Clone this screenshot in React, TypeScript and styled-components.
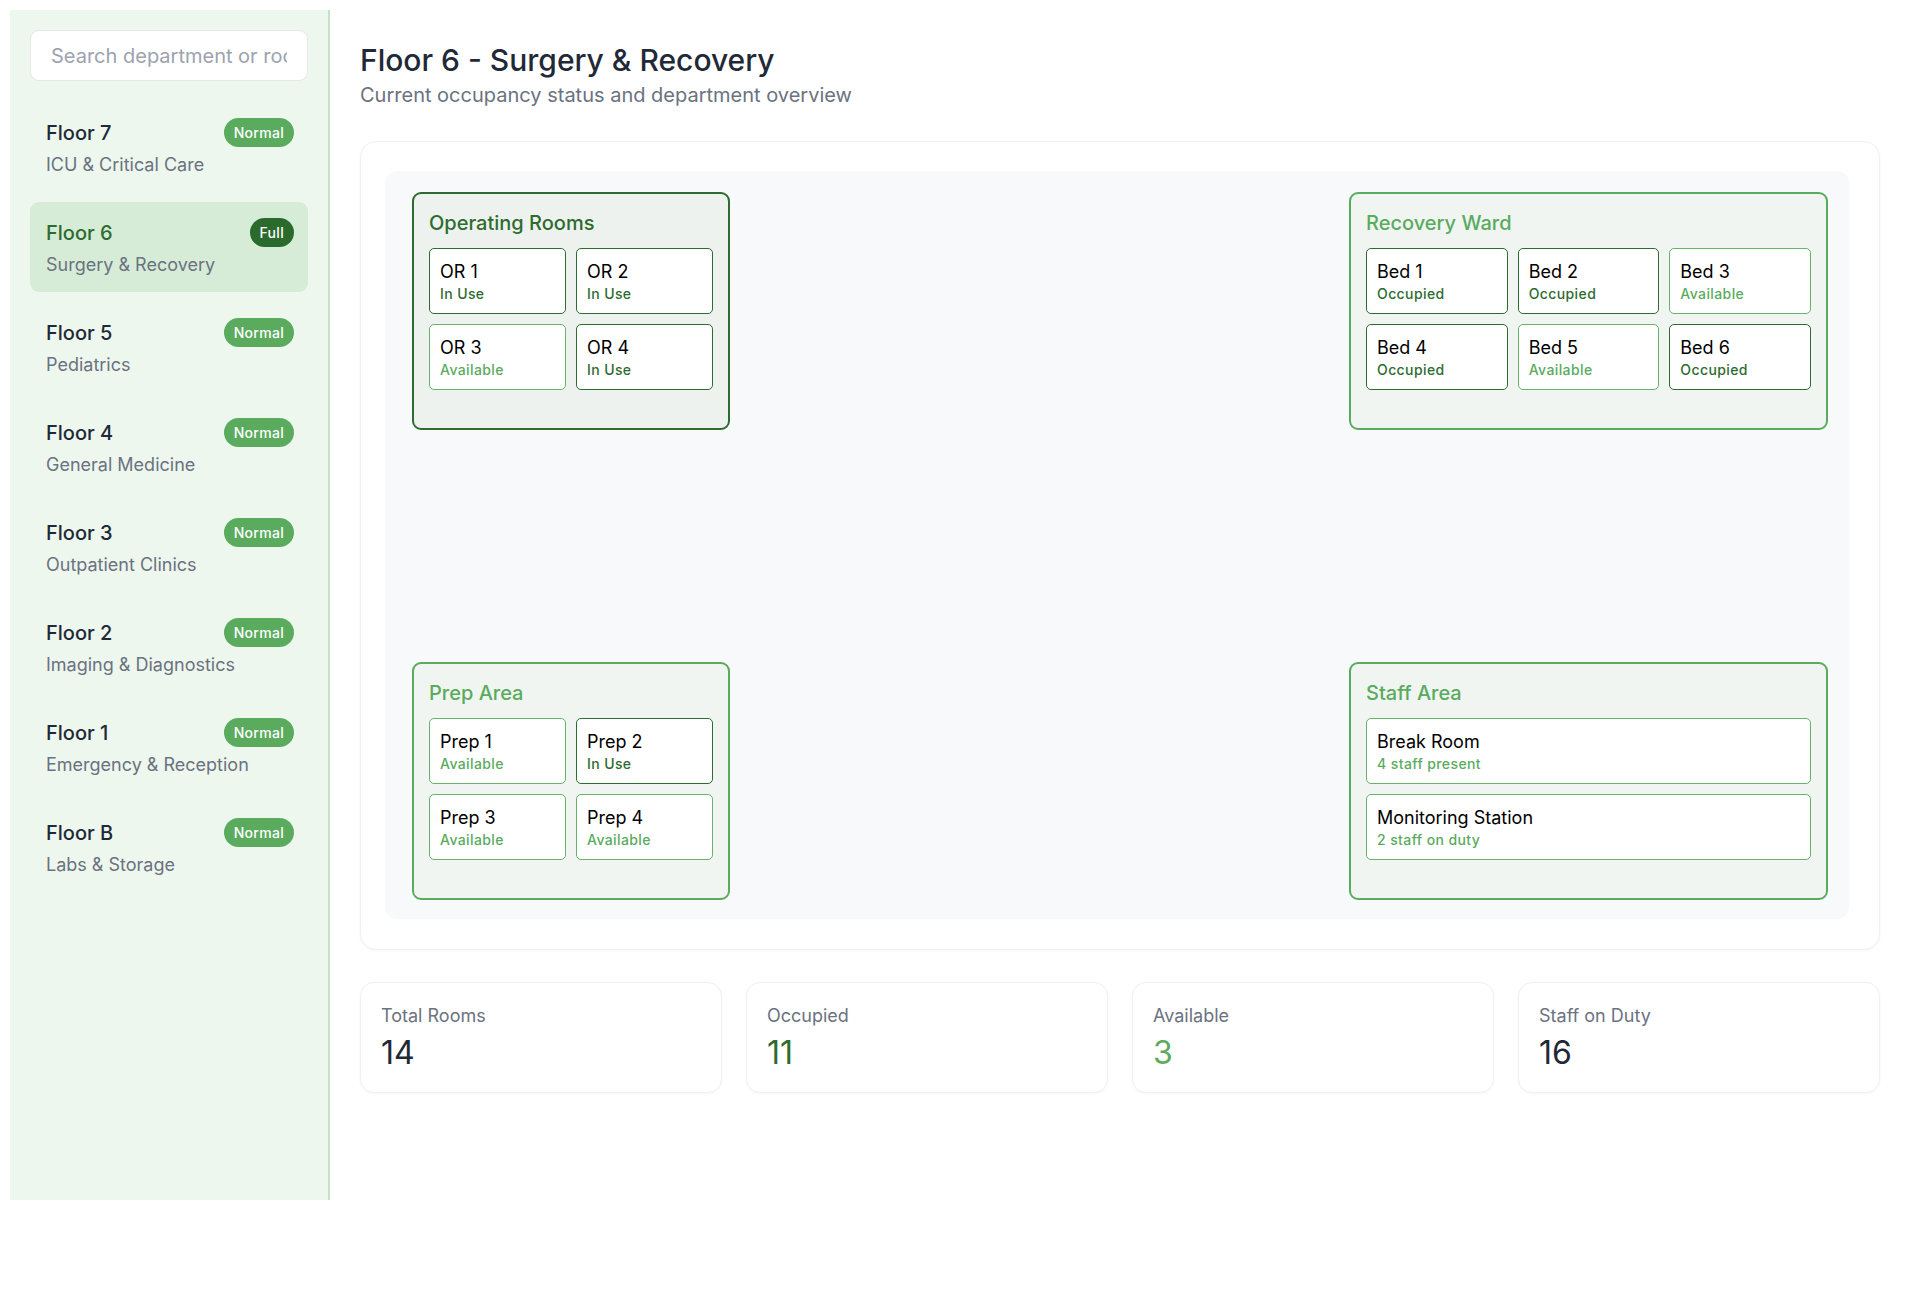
import React from "react";
import styled, { createGlobalStyle, css } from "styled-components";

const GlobalStyle = createGlobalStyle`
  * { box-sizing: border-box; }
  body {
    margin: 0;
    background: #ffffff;
    font-family: Inter, "Noto Sans", "Liberation Sans", sans-serif;
    color: #1f2937;
  }
`;

const DARK = "#2e6b30";
const MID = "#5aab5e";
const LIGHT_BORDER = "#66b36a";

const App = styled.div`
  display: flex;
  align-items: flex-start;
  padding: 10px;
`;

const Sidebar = styled.aside`
  width: 320px;
  flex-shrink: 0;
  min-height: 1190px;
  background: #edf7ee;
  border-right: 2px solid #c5e1c6;
  padding: 20px;
  display: flex;
  flex-direction: column;
`;

const Search = styled.input`
  width: 100%;
  height: 51px;
  padding: 12px 20px;
  border: 1px solid #e5e7eb;
  border-radius: 9px;
  background: #ffffff;
  font-family: inherit;
  font-size: 20px;
  line-height: 25px;
  color: #1f2937;
  margin-bottom: 21px;
  outline: none;
  &::placeholder { color: #9ca3af; }
`;

const FloorList = styled.div`
  display: flex;
  flex-direction: column;
  gap: 10px;
`;

const FloorItem = styled.div<{ $active?: boolean }>`
  height: 90px;
  padding: 16px 14px 16px 16px;
  border-radius: 9px;
  background: ${(p) => (p.$active ? "#d6ecd7" : "transparent")};
`;

const FloorHead = styled.div`
  display: flex;
  align-items: center;
  justify-content: space-between;
  height: 29px;
`;

const FloorName = styled.div<{ $active?: boolean }>`
  font-size: 20px;
  line-height: 24px;
  font-weight: 500;
  color: ${(p) => (p.$active ? DARK : "#1f2937")};
`;

const FloorDept = styled.div`
  margin-top: 6px;
  font-size: 18px;
  line-height: 23px;
  color: #6b7280;
`;

const Badge = styled.span<{ $full?: boolean }>`
  display: inline-block;
  padding: 6px 10px;
  border-radius: 999px;
  font-size: 14px;
  line-height: 17px;
  font-weight: 500;
  letter-spacing: 0.3px;
  color: #ffffff;
  background: ${(p) => (p.$full ? "#2b6a2d" : MID)};
`;

const Main = styled.main`
  flex: 1;
  padding: 32px 30px 30px 30px;
`;

const Title = styled.h1`
  margin: 0;
  font-size: 30px;
  line-height: 36px;
  font-weight: 500;
  color: #1f2937;
`;

const Subtitle = styled.p`
  margin: 4px 0 0;
  font-size: 20px;
  line-height: 26px;
  color: #6b7280;
`;

const PlanCard = styled.section`
  margin-top: 33px;
  background: #ffffff;
  border: 1px solid #f0f1f2;
  border-radius: 16px;
  box-shadow: 0 1px 3px rgba(0, 0, 0, 0.04);
  padding: 29px 30px 30px 24px;
`;

const FloorPlan = styled.div`
  min-height: 748px;
  background: #f8f9fa;
  border-radius: 12px;
  padding: 21px 21px 19px 27px;
  display: grid;
  grid-template-columns: 318px 1fr 479px;
  grid-template-rows: 238px 1fr 238px;
`;

const Zone = styled.div<{ $tone: "dark" | "mid"; $col: number; $row: number }>`
  grid-column: ${(p) => p.$col};
  grid-row: ${(p) => p.$row};
  height: 238px;
  border-radius: 9px;
  padding: 15px;
  border: 2px solid ${(p) => (p.$tone === "dark" ? DARK : MID)};
  background: ${(p) => (p.$tone === "dark" ? "#eef2ef" : "#f0f5f1")};
`;

const ZoneTitle = styled.div<{ $tone: "dark" | "mid" }>`
  font-size: 20px;
  line-height: 28px;
  font-weight: 500;
  margin-bottom: 11px;
  color: ${(p) => (p.$tone === "dark" ? DARK : MID)};
`;

const RoomGrid = styled.div<{ $cols: number }>`
  display: grid;
  grid-template-columns: repeat(${(p) => p.$cols}, 1fr);
  gap: 10px;
`;

const Room = styled.div<{ $busy?: boolean }>`
  height: 66px;
  padding: 11px 10px 9px;
  border-radius: 5px;
  background: #ffffff;
  border: 1px solid ${(p) => (p.$busy ? DARK : LIGHT_BORDER)};
`;

const RoomName = styled.div`
  font-size: 18px;
  line-height: 24px;
  font-weight: 400;
  color: #000000;
`;

const RoomStatus = styled.div<{ $busy?: boolean }>`
  font-size: 14px;
  line-height: 20px;
  font-weight: 500;
  letter-spacing: 0.4px;
  color: ${(p) => (p.$busy ? DARK : MID)};
`;

const Stats = styled.div`
  margin-top: 32px;
  display: grid;
  grid-template-columns: repeat(4, 1fr);
  gap: 24px;
`;

const StatCard = styled.div`
  background: #ffffff;
  border: 1px solid #f0f1f2;
  border-radius: 14px;
  box-shadow: 0 1px 3px rgba(0, 0, 0, 0.04);
  padding: 20px;
`;

const StatLabel = styled.div`
  font-size: 18px;
  line-height: 25px;
  color: #6b7280;
`;

const StatValue = styled.div<{ $color?: string }>`
  margin-top: 6px;
  font-size: 32px;
  line-height: 38px;
  font-weight: 400;
  ${(p) => css`color: ${p.$color || "#1f2937"};`}
`;

const floors = [
  { name: "Floor 7", dept: "ICU & Critical Care", status: "Normal" },
  { name: "Floor 6", dept: "Surgery & Recovery", status: "Full", active: true },
  { name: "Floor 5", dept: "Pediatrics", status: "Normal" },
  { name: "Floor 4", dept: "General Medicine", status: "Normal" },
  { name: "Floor 3", dept: "Outpatient Clinics", status: "Normal" },
  { name: "Floor 2", dept: "Imaging & Diagnostics", status: "Normal" },
  { name: "Floor 1", dept: "Emergency & Reception", status: "Normal" },
  { name: "Floor B", dept: "Labs & Storage", status: "Normal" },
];

type R = { name: string; status: string; busy: boolean };

const zones: {
  title: string;
  tone: "dark" | "mid";
  col: number;
  row: number;
  cols: number;
  rooms: R[];
}[] = [
  {
    title: "Operating Rooms",
    tone: "dark",
    col: 1,
    row: 1,
    cols: 2,
    rooms: [
      { name: "OR 1", status: "In Use", busy: true },
      { name: "OR 2", status: "In Use", busy: true },
      { name: "OR 3", status: "Available", busy: false },
      { name: "OR 4", status: "In Use", busy: true },
    ],
  },
  {
    title: "Recovery Ward",
    tone: "mid",
    col: 3,
    row: 1,
    cols: 3,
    rooms: [
      { name: "Bed 1", status: "Occupied", busy: true },
      { name: "Bed 2", status: "Occupied", busy: true },
      { name: "Bed 3", status: "Available", busy: false },
      { name: "Bed 4", status: "Occupied", busy: true },
      { name: "Bed 5", status: "Available", busy: false },
      { name: "Bed 6", status: "Occupied", busy: true },
    ],
  },
  {
    title: "Prep Area",
    tone: "mid",
    col: 1,
    row: 3,
    cols: 2,
    rooms: [
      { name: "Prep 1", status: "Available", busy: false },
      { name: "Prep 2", status: "In Use", busy: true },
      { name: "Prep 3", status: "Available", busy: false },
      { name: "Prep 4", status: "Available", busy: false },
    ],
  },
  {
    title: "Staff Area",
    tone: "mid",
    col: 3,
    row: 3,
    cols: 1,
    rooms: [
      { name: "Break Room", status: "4 staff present", busy: false },
      { name: "Monitoring Station", status: "2 staff on duty", busy: false },
    ],
  },
];

const stats = [
  { label: "Total Rooms", value: "14" },
  { label: "Occupied", value: "11", color: DARK },
  { label: "Available", value: "3", color: MID },
  { label: "Staff on Duty", value: "16" },
];

export default function HospitalApp() {
  return (
    <>
      <GlobalStyle />
      <App>
        <Sidebar>
          <Search placeholder="Search department or room..." />
          <FloorList>
            {floors.map((f) => (
              <FloorItem key={f.name} $active={f.active}>
                <FloorHead>
                  <FloorName $active={f.active}>{f.name}</FloorName>
                  <Badge $full={f.status === "Full"}>{f.status}</Badge>
                </FloorHead>
                <FloorDept>{f.dept}</FloorDept>
              </FloorItem>
            ))}
          </FloorList>
        </Sidebar>
        <Main>
          <Title>Floor 6 - Surgery &amp; Recovery</Title>
          <Subtitle>Current occupancy status and department overview</Subtitle>
          <PlanCard>
            <FloorPlan>
              {zones.map((z) => (
                <Zone key={z.title} $tone={z.tone} $col={z.col} $row={z.row}>
                  <ZoneTitle $tone={z.tone}>{z.title}</ZoneTitle>
                  <RoomGrid $cols={z.cols}>
                    {z.rooms.map((r) => (
                      <Room key={r.name} $busy={r.busy}>
                        <RoomName>{r.name}</RoomName>
                        <RoomStatus $busy={r.busy}>{r.status}</RoomStatus>
                      </Room>
                    ))}
                  </RoomGrid>
                </Zone>
              ))}
            </FloorPlan>
          </PlanCard>
          <Stats>
            {stats.map((s) => (
              <StatCard key={s.label}>
                <StatLabel>{s.label}</StatLabel>
                <StatValue $color={s.color}>{s.value}</StatValue>
              </StatCard>
            ))}
          </Stats>
        </Main>
      </App>
    </>
  );
}
